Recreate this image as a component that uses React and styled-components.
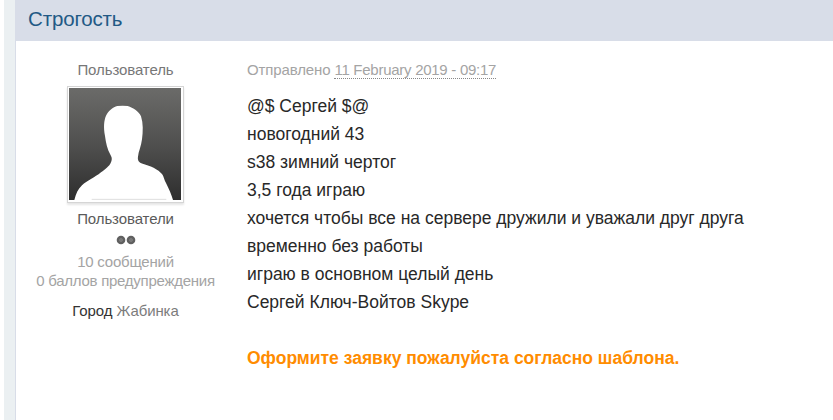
import React from "react";
import styled, { createGlobalStyle } from "styled-components";

const GlobalStyle = createGlobalStyle`
  html, body { margin: 0; padding: 0; background: #fff; overflow: hidden; }
  body { font-family: "Liberation Sans", Arial, sans-serif; }
`;

const Page = styled.div`
  box-sizing: border-box;
  height: 420px;
  padding-left: 4px;
  display: flex;
`;

const Gutter = styled.div`
  flex: none;
  width: 11px;
  background: #ebf0f2;
`;

const Post = styled.article`
  flex: 1;
  min-width: 0;
  border-left: 1px solid #d8dde8;
`;

const Header = styled.h3`
  box-sizing: border-box;
  margin: 0;
  height: 41px;
  padding: 7px 12px 0;
  background: #d8dde8;
  color: #225985;
  font-size: 20.5px;
  font-weight: 400;
  line-height: 24px;
  letter-spacing: -0.15px;
`;

const Columns = styled.div`
  display: flex;
`;

const Author = styled.aside`
  flex: none;
  width: 219px;
  padding-top: 19px;
  display: flex;
  flex-direction: column;
  align-items: center;
`;

const AuthorLine = styled.div`
  font-size: 15px;
  line-height: 19px;
  white-space: nowrap;
  color: ${(p) => p.$color || "#5a5a5a"};
  letter-spacing: ${(p) => p.$track || 0}px;
  margin-top: ${(p) => p.$gap || 0}px;
`;

const Value = styled.span`
  color: #7c7c7c;
`;

const Frame = styled.div`
  box-sizing: border-box;
  width: 117px;
  height: 117px;
  margin-top: 7px;
  padding: 1px;
  border: 1px solid #d5d5d5;
  background: #fff;
  box-shadow: 0 2px 2px rgba(0, 0, 0, 0.1);
`;

const Portrait = styled.svg`
  display: block;
  width: 112px;
  height: 112px;
`;

const Rank = styled.svg`
  display: block;
  width: 20px;
  height: 10px;
  margin-top: 7px;
`;

const Body = styled.section`
  padding: 19px 0 0 12px;
  white-space: nowrap;
`;

const Posted = styled.div`
  font-size: 15px;
  line-height: 19px;
  color: #a4a4a4;
  letter-spacing: -0.13px;
`;

const Stamp = styled.abbr`
  display: inline-block;
  line-height: 16px;
  text-decoration: none;
  border-bottom: 1px dotted #888;
  letter-spacing: -0.27px;
`;

const Message = styled.div`
  margin-top: 13px;
  font-size: 17.5px;
  line-height: 28px;
  color: #282828;
`;

const Line = styled.div`
  min-height: 28px;
`;

const Notice = styled(Line)`
  color: #ff8c00;
  font-weight: 700;
`;

const lines = [
  "@$ Сергей $@",
  "новогодний 43",
  "s38 зимний чертог",
  "3,5 года играю",
  "хочется чтобы все на сервере дружили и уважали друг друга",
  "временно без работы",
  "играю в основном целый день",
  "Сергей Ключ-Войтов Skype",
];

function Avatar() {
  return (
    <Frame>
      <Portrait viewBox="42 24 336 336">
        <defs>
          <linearGradient id="shade" x1="0" y1="0" x2="0" y2="1">
            <stop offset="0" stopColor="#6b6b69" />
            <stop offset="0.5" stopColor="#50504f" />
            <stop offset="1" stopColor="#2e2e2e" />
          </linearGradient>
        </defs>
        <rect x="42" y="24" width="336" height="336" fill="url(#shade)" />
        <path
          fill="#fff"
          d="M58 360C63 341 69 327 81 316C96 302 119 293 138 277C151 268 164 257 167 249C171 240 172 235 167 226C156 207 153 188 150 168C145 141 147 121 153 107C160 93 174 81 187 78Q203 76 218 78C235 83 252 95 258 109C265 131 264 155 261 178C259 198 250 216 249 230C247 240 252 248 263 251C288 258 310 268 321 282C326 288 328 301 333 309C341 326 350 344 354 360Z"
        />
        <path d="M110 358H334" stroke="#dedede" strokeWidth="3" />
      </Portrait>
    </Frame>
  );
}

function RankDots() {
  return (
    <Rank viewBox="0 0 20 10">
      {[5, 15].map((x) => (
        <g key={x}>
          <circle cx={x} cy="5" r="4.3" fill="#606060" />
          <circle cx={x} cy="5" r="1.6" fill="#777" stroke="#8a8a8a" strokeWidth="0.5" />
        </g>
      ))}
    </Rank>
  );
}

export default function App() {
  return (
    <>
      <GlobalStyle />
      <Page>
        <Gutter />
        <Post>
          <Header>Строгость</Header>
          <Columns>
            <Author>
              <AuthorLine $color="#777" $track={-0.1}>Пользователь</AuthorLine>
              <Avatar />
              <AuthorLine $gap={6} $track={-0.1}>Пользователи</AuthorLine>
              <RankDots />
              <AuthorLine $color="#a4a4a4" $gap={7} $track={-0.22}>10 сообщений</AuthorLine>
              <AuthorLine $color="#a4a4a4" $track={-0.26}>0 баллов предупреждения</AuthorLine>
              <AuthorLine $gap={11} $color="#333" $track={-0.1}>
                Город <Value>Жабинка</Value>
              </AuthorLine>
            </Author>
            <Body>
              <Posted>
                Отправлено <Stamp>11 February 2019 - 09:17</Stamp>
              </Posted>
              <Message>
                {lines.map((text) => (
                  <Line key={text}>{text}</Line>
                ))}
                <Line />
                <Notice>Оформите заявку пожалуйста согласно шаблона.</Notice>
              </Message>
            </Body>
          </Columns>
        </Post>
      </Page>
    </>
  );
}
